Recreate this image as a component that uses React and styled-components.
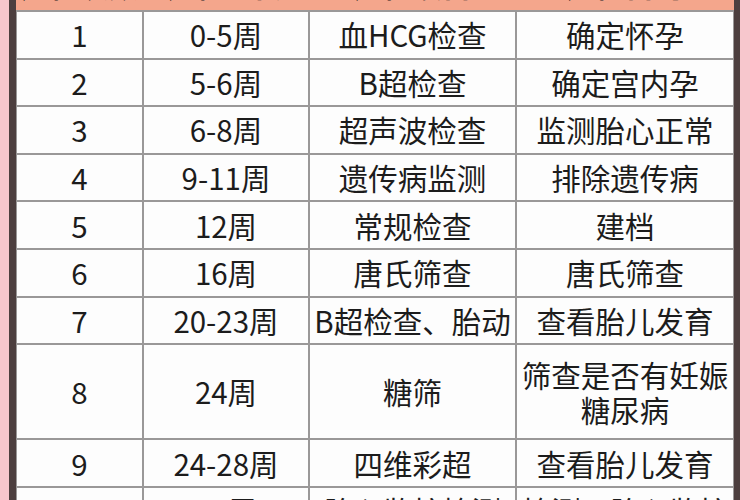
import React from 'react';
import styled, { createGlobalStyle } from 'styled-components';

const GlobalStyle = createGlobalStyle`
  html, body {
    margin: 0;
    padding: 0;
    background: #f7c7cd;
  }
  body {
    font-family: "Noto Sans CJK SC", "Noto Sans", sans-serif;
  }
`;

const Page = styled.div`
  width: 750px;
  height: 500px;
  overflow: hidden;
  background: #f7c7cd;
  padding: 0 10px 0 9px;
  box-sizing: border-box;
`;

const Frame = styled.div`
  height: 100%;
  border-left: 7px solid #4d3f3f;
  border-right: 6px solid #4d3f3f;
  background: #fdfdfd;
  overflow: hidden;
`;

const HeadRow = styled.div`
  display: grid;
  grid-template-columns: 125px 164px 205px 1fr;
  gap: 2px;
  padding: 0 1px;
  margin-top: -36px;
  background: #f4a68c;
  border-bottom: 2px solid #9a9898;
`;

const Grid = styled.div`
  display: grid;
  grid-template-columns: 125px 164px 205px 1fr;
  gap: 2px;
  padding: 0 1px;
  background: #9a9898;
`;

const Cell = styled.div`
  display: flex;
  align-items: center;
  justify-content: center;
  text-align: center;
  height: ${p => (p.$tall ? '93.3px' : '45.6px')};
  padding: 0 2px;
  box-sizing: border-box;
  background: #fdfdfd;
  color: #1c1c1c;
  font-size: 29.5px;
  line-height: 35px;
  white-space: pre-line;
`;

const HeadCell = styled(Cell)`
  height: 46px;
  background: #f4a68c;
  font-weight: 700;
  padding-bottom: 5px;
`;

const rows = [
  ['1', '0-5周', '血HCG检查', '确定怀孕'],
  ['2', '5-6周', 'B超检查', '确定宫内孕'],
  ['3', '6-8周', '超声波检查', '监测胎心正常'],
  ['4', '9-11周', '遗传病监测', '排除遗传病'],
  ['5', '12周', '常规检查', '建档'],
  ['6', '16周', '唐氏筛查', '唐氏筛查'],
  ['7', '20-23周', 'B超检查、胎动', '查看胎儿发育'],
  ['8', '24周', '糖筛', '筛查是否有妊娠\n糖尿病'],
  ['9', '24-28周', '四维彩超', '查看胎儿发育'],
  ['10', '28周', '胎心监护检测', '检测、胎心监护'],
];

const head = ['产检次数', '产检时间', '产检项目', '产检目的'];

export default function App() {
  return (
    <>
      <GlobalStyle />
      <Page>
        <Frame>
          <HeadRow>
            {head.map(h => (
              <HeadCell key={h}>{h}</HeadCell>
            ))}
          </HeadRow>
          <Grid>
            {rows.map(r =>
              r.map((c, i) => (
                <Cell key={r[0] + '-' + i} $tall={r[0] === '8'}>
                  {c}
                </Cell>
              ))
            )}
          </Grid>
        </Frame>
      </Page>
    </>
  );
}
